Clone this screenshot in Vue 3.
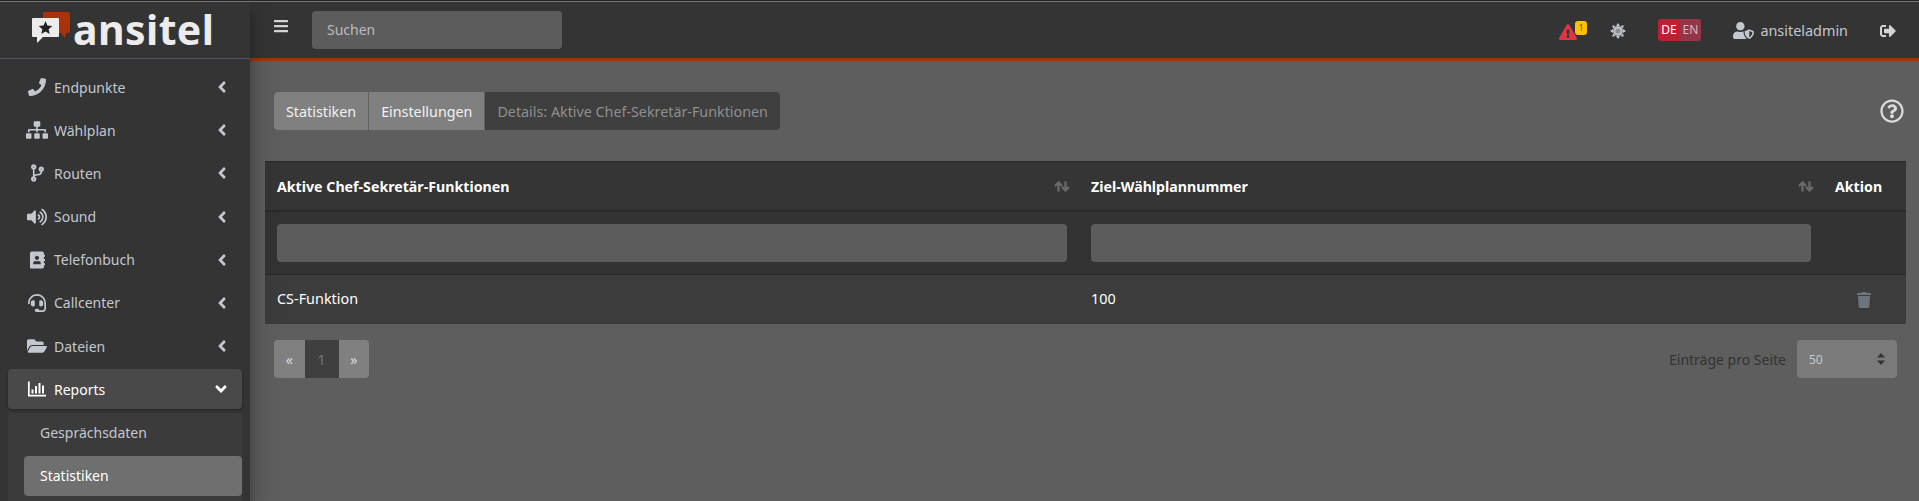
<script setup>
const ANGLE_LEFT = 'M31.7 239l136-136c9.4-9.4 24.6-9.4 33.9 0l22.6 22.6c9.4 9.4 9.4 24.6 0 33.9L127.9 256l96.4 96.4c9.4 9.4 9.4 24.6 0 33.9L201.7 409c-9.4 9.4-24.6 9.4-33.9 0l-136-136c-9.5-9.4-9.5-24.6-.1-34z'
const ANGLE_DOWN = 'M143 352.3L7 216.3c-9.4-9.4-9.4-24.6 0-33.9l22.6-22.6c9.4-9.4 24.6-9.4 33.9 0l96.4 96.4 96.4-96.4c9.4-9.4 24.6-9.4 33.9 0l22.6 22.6c9.4 9.4 9.4 24.6 0 33.9l-136 136c-9.2 9.4-24.4 9.4-33.8 0z'

const navItems = [
  { label: 'Endpunkte', vb: '0 0 512 512', w: 18, d: 'M493.4 24.6l-104-24c-11.3-2.6-22.9 3.3-27.5 13.9l-48 112c-4.2 9.8-1.4 21.3 6.9 28l60.6 49.6c-36 76.7-98.9 140.5-177.2 177.2l-49.6-60.6c-6.8-8.3-18.2-11.1-28-6.9l-112 48C3.9 366.5-2 378.1.6 389.4l24 104C27.1 504.2 36.7 512 48 512c256.1 0 464-207.5 464-464 0-11.2-7.7-20.9-18.6-23.4z' },
  { label: 'Wählplan', vb: '0 0 640 512', w: 22, d: 'M128 352H32c-17.67 0-32 14.33-32 32v96c0 17.67 14.33 32 32 32h96c17.67 0 32-14.33 32-32v-96c0-17.67-14.33-32-32-32zm-24-80h192v48h48v-48h192v48h48v-57.59c0-21.17-17.23-38.41-38.41-38.41H344v-64h40c17.67 0 32-14.33 32-32V32c0-17.67-14.33-32-32-32H256c-17.67 0-32 14.33-32 32v96c0 17.67 14.33 32 32 32h40v64H94.41C73.23 224 56 241.23 56 262.41V320h48v-48zm264 80h-96c-17.67 0-32 14.33-32 32v96c0 17.67 14.33 32 32 32h96c17.67 0 32-14.33 32-32v-96c0-17.67-14.33-32-32-32zm240 0h-96c-17.67 0-32 14.33-32 32v96c0 17.67 14.33 32 32 32h96c17.67 0 32-14.33 32-32v-96c0-17.67-14.33-32-32-32z' },
  { label: 'Routen', vb: '0 0 384 512', w: 13, d: 'M384 144c0-44.2-35.8-80-80-80s-80 35.8-80 80c0 36.4 24.3 67.1 57.5 76.8-.6 16.1-4.2 28.5-11 36.9-15.4 19.2-49.3 22.4-85.2 25.7-28.2 2.6-57.4 5.4-81.3 16.9v-144c32.5-10.2 56-40.5 56-76.3 0-44.2-35.8-80-80-80S0 35.8 0 80c0 35.8 23.5 66.1 56 76.3v199.3C23.5 365.9 0 396.2 0 432c0 44.2 35.8 80 80 80s80-35.8 80-80c0-34-21.2-63.1-51.2-74.6 3.1-5.2 7.8-9.8 14.9-13.4 16.2-8.2 40.4-10.4 66.1-12.8 42.2-3.9 90-8.4 118.2-43.4 14-17.4 21.1-39.8 21.6-67.9 31.6-10.8 54.4-40.7 54.4-75.9zM80 64c8.8 0 16 7.2 16 16s-7.2 16-16 16-16-7.2-16-16 7.2-16 16-16zm0 384c-8.8 0-16-7.2-16-16s7.2-16 16-16 16 7.2 16 16-7.2 16-16 16zm224-320c8.8 0 16 7.2 16 16s-7.2 16-16 16-16-7.2-16-16 7.2-16 16-16z' },
  { label: 'Sound', vb: '0 0 576 512', w: 20, d: 'M215.03 71.05L126.06 160H24c-13.26 0-24 10.74-24 24v144c0 13.25 10.74 24 24 24h102.06l88.97 88.95c15.03 15.03 40.97 4.47 40.97-16.97V88.02c0-21.46-25.96-31.98-40.97-16.97zm233.32-51.08c-11.17-7.33-26.18-4.24-33.51 6.95-7.34 11.17-4.22 26.18 6.95 33.51 66.27 43.49 105.82 116.6 105.82 195.58 0 78.98-39.55 152.09-105.82 195.58-11.17 7.32-14.29 22.34-6.95 33.5 7.04 10.71 21.93 14.56 33.51 6.95C528.27 439.58 576 351.33 576 256S528.27 72.43 448.35 19.97zM480 256c0-63.53-32.06-121.94-85.77-156.24-11.19-7.14-26.03-3.82-33.12 7.46s-3.78 26.21 7.41 33.36C408.27 165.97 432 209.11 432 256s-23.73 90.03-63.48 115.42c-11.19 7.14-14.5 22.07-7.41 33.36 6.51 10.36 21.12 15.14 33.12 7.46C447.94 377.94 480 319.54 480 256zm-141.77-76.87c-11.58-6.33-26.19-2.16-32.61 9.45-6.39 11.61-2.16 26.2 9.45 32.61C327.98 228.28 336 241.63 336 256c0 14.38-8.02 27.72-20.92 34.81-11.61 6.41-15.84 21-9.45 32.61 6.43 11.66 21.05 15.8 32.61 9.45 28.23-15.55 45.77-45 45.77-76.88s-17.54-61.32-45.78-76.86z' },
  { label: 'Telefonbuch', vb: '0 0 448 512', w: 15, d: 'M436 160c6.6 0 12-5.4 12-12v-40c0-6.6-5.4-12-12-12h-20V48c0-26.5-21.5-48-48-48H48C21.5 0 0 21.5 0 48v416c0 26.5 21.5 48 48 48h320c26.5 0 48-21.5 48-48v-48h20c6.6 0 12-5.4 12-12v-40c0-6.6-5.4-12-12-12h-20v-64h20c6.6 0 12-5.4 12-12v-40c0-6.6-5.4-12-12-12h-20v-64h20zm-228-32c35.3 0 64 28.7 64 64s-28.7 64-64 64-64-28.7-64-64 28.7-64 64-64zm112 236.8c0 10.6-10 19.2-22.4 19.2H118.4C106 384 96 375.4 96 364.8v-19.2c0-31.8 30.1-57.6 67.2-57.6h5c12.3 5.1 25.7 8 39.8 8s27.6-2.9 39.8-8h5c37.1 0 67.2 25.8 67.2 57.6v19.2z' },
  { label: 'Callcenter', vb: '0 0 512 512', w: 18, d: 'M192 208c0-17.67-14.33-32-32-32h-16c-35.35 0-64 28.65-64 64v48c0 35.35 28.65 64 64 64h16c17.67 0 32-14.33 32-32V208zm176 144c35.35 0 64-28.65 64-64v-48c0-35.35-28.65-64-64-64h-16c-17.67 0-32 14.33-32 32v112c0 17.67 14.33 32 32 32h16zM256 0C113.18 0 4.58 118.83 0 256v16c0 8.84 7.16 16 16 16h16c8.84 0 16-7.16 16-16v-16c0-114.69 93.31-208 208-208s208 93.31 208 208h-.12c.08 2.43.12 165.72.12 165.72 0 23.35-18.93 42.28-42.28 42.28H320c0-26.51-21.49-48-48-48h-32c-26.51 0-48 21.49-48 48s21.49 48 48 48h181.72c49.86 0 90.28-40.42 90.28-90.28V256C507.42 118.83 398.82 0 256 0z' },
  { label: 'Dateien', vb: '0 0 576 512', w: 20, d: 'M572.694 292.093L500.27 416.248A63.997 63.997 0 0 1 444.989 448H45.025c-18.523 0-30.064-20.093-20.731-36.093l72.424-124.155A64 64 0 0 1 152 256h399.964c18.523 0 30.064 20.093 20.73 36.093zM152 224h328v-48c0-26.51-21.49-48-48-48H272l-64-64H48C21.49 64 0 85.49 0 112v278.046l69.077-118.418C86.214 242.25 117.989 224 152 224z' },
  { label: 'Reports', vb: '0 0 18 15', w: 18, open: true, d: 'M0 0h1.7v13.3H18V15H0zM3.5 8h2v4h-2zM7 4.5h2V12H7zM10.5 1.5h2V12h-2zM14 4h2v8h-2z' }
]

const subItems = [
  { label: 'Gesprächsdaten', active: false },
  { label: 'Statistiken', active: true }
]
</script>

<template>
  <div class="topline"></div>
  <div class="shell">
    <aside class="sidebar">
      <div class="brand">
        <svg class="brand__mark" viewBox="0 0 40 32" width="40" height="32">
          <path d="M11 0h25a2 2 0 0 1 2 2v17a2 2 0 0 1-2 2h-2l-1 5-4-5H11z" fill="#a93209" />
          <path d="M1 6h25a1 1 0 0 1 1 1v17a1 1 0 0 1-1 1H11l-6 6v-6H1a1 1 0 0 1-1-1V7a1 1 0 0 1 1-1z" fill="#ececec" />
          <path d="M13.5 9l1.9 4.6 4.9.4-3.7 3.2 1.1 4.8-4.2-2.5-4.2 2.5 1.1-4.8L6.7 14l4.9-.4z" fill="#222" />
        </svg>
        <span class="brand__name">ansitel</span>
      </div>
      <nav class="nav">
        <a v-for="item in navItems" :key="item.label" class="nav__link" :class="{ 'nav__link--open': item.open }">
          <span class="nav__icon">
            <svg :viewBox="item.vb" :width="item.w" height="18"><path :d="item.d" fill="currentColor" /></svg>
          </span>
          <span class="nav__label">{{ item.label }}</span>
          <svg v-if="item.open" class="nav__arrow" viewBox="0 0 320 512" width="12" height="18"><path :d="ANGLE_DOWN" fill="currentColor" /></svg>
          <svg v-else class="nav__arrow" viewBox="0 0 256 512" width="10" height="18"><path :d="ANGLE_LEFT" fill="currentColor" /></svg>
        </a>
        <div class="subnav">
          <a v-for="sub in subItems" :key="sub.label" class="subnav__link" :class="{ 'subnav__link--active': sub.active }">{{ sub.label }}</a>
        </div>
      </nav>
    </aside>

    <div class="main">
      <header class="topbar">
        <svg class="topbar__burger" viewBox="0 0 448 512" width="14" height="16"><path fill="currentColor" d="M16 132h416c8.837 0 16-7.163 16-16V76c0-8.837-7.163-16-16-16H16C7.163 60 0 67.163 0 76v40c0 8.837 7.163 16 16 16zm0 160h416c8.837 0 16-7.163 16-16v-40c0-8.837-7.163-16-16-16H16c-8.837 0-16 7.163-16 16v40c0 8.837 7.163 16 16 16zm0 160h416c8.837 0 16-7.163 16-16v-40c0-8.837-7.163-16-16-16H16c-8.837 0-16 7.163-16 16v40c0 8.837 7.163 16 16 16z" /></svg>
        <div class="search">Suchen</div>
        <div class="topbar__right">
          <span class="alert">
            <svg viewBox="0 0 576 512" width="18" height="16"><path fill="#dc3545" d="M569.517 440.013C587.975 472.007 564.806 512 527.94 512H48.054c-36.937 0-59.999-40.055-41.577-71.987L246.423 23.985c18.467-32.009 64.72-31.951 83.154 0l239.94 416.028zM288 354c-25.405 0-46 20.595-46 46s20.595 46 46 46 46-20.595 46-46-20.595-46-46-46zm-43.673-165.346l7.418 136c.347 6.364 5.609 11.346 11.982 11.346h48.546c6.373 0 11.635-4.982 11.982-11.346l7.418-136c.375-6.874-5.098-12.654-11.982-12.654h-63.383c-6.884 0-12.356 5.78-11.981 12.654z" /></svg>
            <span class="alert__badge">1</span>
          </span>
          <svg class="sun" viewBox="0 0 16 16" width="16" height="16">
            <circle cx="8" cy="8" r="3.7" fill="#8a8f96" stroke="currentColor" stroke-width="2.2" />
            <path fill="currentColor" d="M8 0l2 3H6zM8 16l-2-3h4zM0 8l3-2v4zM16 8l-3 2V6zM2.3 2.3l3.5.7-2.8 2.8zM13.7 13.7l-3.5-.7 2.8-2.8zM13.7 2.3L13 5.8 10.2 3zM2.3 13.7L3 10.2 5.8 13z" />
          </svg>
          <div class="lang">
            <span class="lang__opt lang__opt--on">DE</span>
            <span class="lang__opt">EN</span>
          </div>
          <div class="user">
            <svg viewBox="0 0 640 512" width="21" height="17"><path fill="currentColor" d="M622.3 271.1l-115.2-45c-4.1-1.6-12.6-3.7-22.2 0l-115.2 45c-10.7 4.2-17.7 14-17.7 24.9 0 111.6 68.7 188.8 132.9 213.9 9.6 3.7 18 1.6 22.2 0C558.4 489.9 640 420.5 640 296c0-10.9-7-20.7-17.7-24.9zM496 462.4V273.3l95.5 37.3c-5.6 87.1-60.9 135.4-95.5 151.8zM224 256c70.7 0 128-57.3 128-128S294.7 0 224 0 96 57.3 96 128s57.3 128 128 128zm96 40c0-2.5.8-4.8 1.1-7.2-2.5-.1-4.9-.8-7.5-.8h-16.7c-22.2 10.2-46.9 16-72.9 16s-50.6-5.8-72.9-16h-16.7C60.2 288 0 348.2 0 422.4V464c0 26.5 21.5 48 48 48h352c6.8 0 13.3-1.5 19.1-4-54-42.9-99.1-116.7-99.1-212z" /></svg>
            <span class="user__name">ansiteladmin</span>
          </div>
          <svg class="logout" viewBox="0 0 512 512" width="16" height="16"><path fill="currentColor" d="M497 273L329 441c-15 15-41 4.5-41-17v-96H152c-13.3 0-24-10.7-24-24v-96c0-13.3 10.7-24 24-24h136V88c0-21.4 25.9-32 41-17l168 168c9.3 9.4 9.3 24.6 0 34zM192 436v-40c0-6.6-5.4-12-12-12H96c-17.7 0-32-14.3-32-32V160c0-17.7 14.3-32 32-32h84c6.6 0 12-5.4 12-12V76c0-6.6-5.4-12-12-12H96c-53 0-96 43-96 96v192c0 53 43 96 96 96h84c6.6 0 12-5.4 12-12z" /></svg>
        </div>
      </header>

      <section class="content">
        <div class="crumbs-row">
          <div class="crumbs">
            <a class="crumbs__btn">Statistiken</a>
            <a class="crumbs__btn">Einstellungen</a>
            <span class="crumbs__current">Details: Aktive Chef-Sekretär-Funktionen</span>
          </div>
          <svg class="help" viewBox="0 0 512 512" width="24" height="24"><path fill="currentColor" d="M256 8C119.043 8 8 119.083 8 256c0 136.997 111.043 248 248 248s248-111.003 248-248C504 119.083 392.957 8 256 8zm0 448c-110.532 0-200-89.431-200-200 0-110.495 89.472-200 200-200 110.491 0 200 89.471 200 200 0 110.53-89.431 200-200 200zm107.244-255.2c0 67.052-72.421 68.084-72.421 92.863V300c0 6.627-5.373 12-12 12h-45.647c-6.627 0-12-5.373-12-12v-8.659c0-35.745 27.1-50.034 47.579-61.516 17.561-9.845 28.324-16.541 28.324-29.579 0-17.246-21.999-28.693-39.784-28.693-23.189 0-33.894 10.977-48.942 29.969-4.057 5.12-11.46 6.071-16.666 2.124l-27.824-21.098c-5.107-3.872-6.251-11.066-2.644-16.363C184.846 131.491 214.94 112 261.794 112c49.071 0 101.45 38.304 101.45 88.8zM298 368c0 23.159-18.841 42-42 42s-42-18.841-42-42 18.841-42 42-42 42 18.841 42 42z" /></svg>
        </div>

        <table class="grid">
          <colgroup>
            <col class="grid__col1" />
            <col class="grid__col2" />
            <col />
          </colgroup>
          <thead>
            <tr class="grid__head">
              <th>
                <div class="th-inner">
                  <span>Aktive Chef-Sekretär-Funktionen</span>
                  <svg class="sort" viewBox="0 0 16 11" width="16" height="11"><path d="M4.5 10.5V2M1 5l3.5-3.5L8 5M11.5.5V9M8 6l3.5 3.5L15 6" fill="none" stroke="currentColor" stroke-width="2.3" /></svg>
                </div>
              </th>
              <th>
                <div class="th-inner">
                  <span>Ziel-Wählplannummer</span>
                  <svg class="sort" viewBox="0 0 16 11" width="16" height="11"><path d="M4.5 10.5V2M1 5l3.5-3.5L8 5M11.5.5V9M8 6l3.5 3.5L15 6" fill="none" stroke="currentColor" stroke-width="2.3" /></svg>
                </div>
              </th>
              <th>Aktion</th>
            </tr>
            <tr class="grid__filter">
              <td><div class="filter-input"></div></td>
              <td><div class="filter-input"></div></td>
              <td></td>
            </tr>
          </thead>
          <tbody>
            <tr class="grid__row">
              <td>CS-Funktion</td>
              <td>100</td>
              <td class="grid__action">
                <svg viewBox="0 0 448 512" width="14" height="16"><path fill="currentColor" d="M432 32H312l-9.4-18.7A24 24 0 0 0 281.1 0H166.8a23.72 23.72 0 0 0-21.4 13.3L136 32H16A16 16 0 0 0 0 48v32a16 16 0 0 0 16 16h416a16 16 0 0 0 16-16V48a16 16 0 0 0-16-16zM53.2 467a48 48 0 0 0 47.9 45h245.8a48 48 0 0 0 47.9-45L416 128H32z" /></svg>
              </td>
            </tr>
          </tbody>
        </table>

        <div class="pager-row">
          <div class="pager">
            <span class="pager__btn">«</span>
            <span class="pager__page">1</span>
            <span class="pager__btn">»</span>
          </div>
          <div class="per-page">
            <span class="per-page__label">Einträge pro Seite</span>
            <div class="per-page__select">
              <span>50</span>
              <svg viewBox="0 0 8 12" width="8" height="12"><path fill="currentColor" d="M4 0l4 4.5H0zM4 12L0 7.5h8z" /></svg>
            </div>
          </div>
        </div>
      </section>
    </div>
  </div>
</template>

<style>
html, body {
  margin: 0;
  height: 501px;
  overflow: hidden;
  background: #5e5e5e;
}
</style>

<style scoped>
* {
  box-sizing: border-box;
}

.topline {
  height: 2px;
  background: linear-gradient(#222 0 1px, #777 1px 2px);
}

.shell {
  display: flex;
  height: 499px;
  font-family: "Noto Sans", sans-serif;
  font-size: 14px;
  overflow: hidden;
}

/* Sidebar */
.sidebar {
  flex: 0 0 250px;
  background: #343434;
  position: relative;
  z-index: 2;
  box-shadow: 0 14px 28px rgba(0, 0, 0, 0.25), 0 10px 10px rgba(0, 0, 0, 0.22);
}

.brand {
  height: 57px;
  display: flex;
  align-items: flex-start;
  padding: 10px 0 0 32px;
  border-bottom: 1px solid #4b545c;
}

.brand__mark {
  flex: none;
}

.brand__name {
  margin: -6px 0 0 1px;
  font-size: 41px;
  font-weight: 700;
  letter-spacing: 0.4px;
  line-height: 46px;
  color: #ececec;
}

.nav {
  padding: 8px 8px 0;
  display: flex;
  flex-direction: column;
  gap: 3.2px;
}

.nav__link {
  height: 40px;
  display: flex;
  align-items: center;
  padding: 0 15px 0 18px;
  border-radius: 4px;
  color: #c2c7d0;
}

.nav__link--open {
  background: #494949;
  color: #fff;
  box-shadow: 0 1px 3px rgba(0, 0, 0, 0.3);
}

.nav__icon {
  width: 28px;
  display: flex;
  justify-content: center;
  padding-right: 6px;
}

.nav__label {
  flex: 1;
}

.subnav {
  background: #3b3b3b;
  padding: 0 0 0 16px;
  border-radius: 4px;
  height: 100px;
}

.subnav__link {
  display: flex;
  align-items: center;
  height: 40px;
  margin-bottom: 3px;
  padding-left: 16px;
  border-radius: 4px;
  color: #c2c7d0;
}

.subnav__link--active {
  background: #6f6f6f;
  color: #fff;
}

/* Top bar */
.main {
  flex: 1;
  min-width: 0;
  display: flex;
  flex-direction: column;
}

.topbar {
  height: 59px;
  flex: none;
  display: flex;
  align-items: flex-start;
  padding: 9px 0 0 24px;
  background: #343434;
  border-bottom: 3px solid #a93209;
  color: #c2c7d0;
}

.topbar__burger {
  margin-top: 7px;
  color: #d4d4d4;
}

.search {
  margin-left: 24px;
  width: 250px;
  height: 38px;
  padding: 0 0 2px 15px;
  display: flex;
  align-items: center;
  border-radius: 4px;
  background: #5c5c5c;
  color: #bbb;
}

.topbar__right {
  margin-left: auto;
  display: flex;
  align-items: center;
  height: 38px;
  padding-right: 23px;
}

.alert {
  position: relative;
  display: flex;
  margin-top: 3px;
}

.alert__badge {
  position: absolute;
  top: -3px;
  left: 16px;
  width: 12px;
  height: 14px;
  border-radius: 3px;
  background: #ffc107;
  color: #6a5a20;
  font-size: 9px;
  line-height: 14px;
  text-align: center;
}

.sun {
  margin: 1px 0 0 33px;
  color: #c2c7d0;
}

.lang {
  margin: 0 0 0 32px;
  display: flex;
  height: 22px;
  border-radius: 3px;
  overflow: hidden;
  font-size: 12px;
  line-height: 22px;
}

.lang__opt {
  padding: 0 3px;
  background: #96354a;
  color: #d8b6bd;
}

.lang__opt--on {
  background: #c01f33;
  color: #fff;
}

.user {
  margin: 0 0 0 32px;
  display: flex;
  align-items: center;
  gap: 6px;
}

.user__name {
  font-size: 14.4px;
}

.logout {
  margin: 1px 0 0 32px;
  color: #d4d4d4;
}

/* Content */
.content {
  flex: 1;
  padding: 31px 13px 0 15px;
  color: #fff;
}

.crumbs-row {
  display: flex;
  align-items: center;
  justify-content: space-between;
  padding-left: 9px;
}

.crumbs {
  display: flex;
  height: 38px;
  border-radius: 4px;
  background: #3f3f3f;
  overflow: hidden;
  font-size: 14.3px;
}

.crumbs__btn {
  display: flex;
  align-items: center;
  padding: 0 12px;
  background: #808080;
  border-right: 1px solid #606060;
  color: #f2f2f2;
}

.crumbs__current {
  display: flex;
  align-items: center;
  padding: 0 12px;
  color: #8f8f8f;
}

.help {
  color: #dcdcdc;
  margin-right: 2px;
}

.grid {
  width: 100%;
  margin-top: 31px;
  border-collapse: separate;
  border-spacing: 0;
  table-layout: fixed;
  color: #fff;
}

.grid__col1 {
  width: 814px;
}

.grid__col2 {
  width: 744px;
}

.grid th,
.grid td {
  padding: 0 12px;
  text-align: left;
}

.grid__head th {
  height: 51px;
  background: #353535;
  border-top: 1px solid #2a2a2a;
  border-bottom: 2px solid #2a2a2a;
  font-size: 14.2px;
  font-weight: 700;
}

.th-inner {
  display: flex;
  align-items: center;
  justify-content: space-between;
}

.sort {
  color: #6a6a6a;
  margin-right: -3px;
}

.grid__filter td {
  height: 63px;
  background: #333;
  border-bottom: 1px solid #2a2a2a;
}

.filter-input {
  height: 38px;
  border-radius: 4px;
  background: #5c5c5c;
}

.grid__row td {
  height: 49px;
  padding-bottom: 2px;
  background: #3c3c3c;
  font-size: 14.4px;
}

.grid__action {
  color: #6c757d;
  text-align: center !important;
}

.grid__action svg {
  display: inline-block;
  vertical-align: middle;
  margin-right: 2px;
}

.pager-row {
  display: flex;
  justify-content: space-between;
  padding: 16px 9px 0;
}

.pager {
  display: flex;
  height: 38px;
  border-radius: 4px;
  overflow: hidden;
}

.pager__btn {
  width: 30.5px;
  display: flex;
  align-items: center;
  justify-content: center;
  background: #808080;
  color: #dcdcdc;
}

.pager__page {
  width: 34px;
  display: flex;
  align-items: center;
  justify-content: center;
  background: #3f3f3f;
  color: #777;
}

.per-page {
  display: flex;
  align-items: center;
  gap: 11px;
}

.per-page__label {
  color: #333;
}

.per-page__select {
  width: 100px;
  height: 38px;
  padding: 0 12px;
  display: flex;
  align-items: center;
  justify-content: space-between;
  border-radius: 4px;
  background: #7b7b7b;
  color: #c8c8c8;
  font-size: 12px;
}

.per-page__select svg {
  color: #333;
}
</style>
